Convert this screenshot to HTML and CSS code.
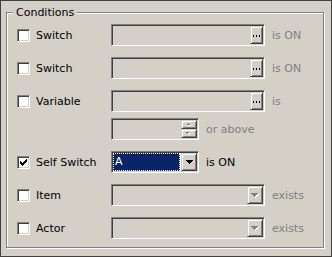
FILE: index.html
```html
<!DOCTYPE html>
<html>
<head>
    <meta http-equiv="Content-Type" content="text/html; charset=utf-8" />
    <link rel="stylesheet" href="styles.css">
    <title>Conditions</title>
</head>
<body>
<div class="window">
    <div class="group">
        <span class="legend">Conditions</span>

        <div class="row">
            <span class="check"></span>
            <span class="label">Switch</span>
            <div class="field">
                <span class="btn"><svg width="7" height="2" viewBox="0 0 7 2"><path d="M0 0h1v2h-1zM3 0h1v2h-1zM6 0h1v2h-1z" fill="#000"/></svg></span>
            </div>
            <span class="after off">is ON</span>
        </div>

        <div class="row">
            <span class="check"></span>
            <span class="label">Switch</span>
            <div class="field">
                <span class="btn"><svg width="7" height="2" viewBox="0 0 7 2"><path d="M0 0h1v2h-1zM3 0h1v2h-1zM6 0h1v2h-1z" fill="#000"/></svg></span>
            </div>
            <span class="after off">is ON</span>
        </div>

        <div class="row tight">
            <span class="check"></span>
            <span class="label">Variable</span>
            <div class="field">
                <span class="btn"><svg width="7" height="2" viewBox="0 0 7 2"><path d="M0 0h1v2h-1zM3 0h1v2h-1zM6 0h1v2h-1z" fill="#000"/></svg></span>
            </div>
            <span class="after off">is</span>
        </div>

        <div class="row">
            <span class="spacer"></span>
            <div class="field short">
                <span class="spin">
                    <span class="btn half"><svg width="6" height="4" viewBox="0 0 6 4"><path d="M3 1h1v1h1v1h-3v-1h1z" fill="#fff"/><path d="M2 0h1v1h1v1h-3v-1h1z" fill="#808080"/></svg></span>
                    <span class="btn half"><svg width="6" height="4" viewBox="0 0 6 4"><path d="M1 1h3v1h-1v1h-1v-1h-1z" fill="#fff"/><path d="M0 0h3v1h-1v1h-1v-1h-1z" fill="#808080"/></svg></span>
                </span>
            </div>
            <span class="after off">or above</span>
        </div>

        <div class="row">
            <span class="check"><svg width="7" height="7" viewBox="0 0 7 7"><path d="M6 0h1v1h-1zM5 1h2v1h-2zM0 2h1v1h-1zM4 2h3v1h-3zM0 3h2v1h-2zM3 3h3v1h-3zM0 4h5v1h-5zM1 5h3v1h-3zM2 6h1v1h-1z" fill="#000"/></svg></span>
            <span class="label">Self Switch</span>
            <div class="field short combo on">
                <span class="sel">A</span>
                <span class="btn drop"><svg width="7" height="4" viewBox="0 0 7 4"><path d="M0 0h7v1h-1v1h-1v1h-1v1h-1v-1h-1v-1h-1v-1h-1z" fill="#000"/></svg></span>
            </div>
            <span class="after">is ON</span>
        </div>

        <div class="row">
            <span class="check"></span>
            <span class="label">Item</span>
            <div class="field">
                <span class="btn drop"><svg width="8" height="5" viewBox="0 0 8 5"><path d="M1 1h7v1h-1v1h-1v1h-1v1h-1v-1h-1v-1h-1v-1h-1z" fill="#fff"/><path d="M0 0h7v1h-1v1h-1v1h-1v1h-1v-1h-1v-1h-1v-1h-1z" fill="#808080"/></svg></span>
            </div>
            <span class="after off">exists</span>
        </div>

        <div class="row">
            <span class="check"></span>
            <span class="label">Actor</span>
            <div class="field">
                <span class="btn drop"><svg width="8" height="5" viewBox="0 0 8 5"><path d="M1 1h7v1h-1v1h-1v1h-1v1h-1v-1h-1v-1h-1v-1h-1z" fill="#fff"/><path d="M0 0h7v1h-1v1h-1v1h-1v1h-1v-1h-1v-1h-1v-1h-1z" fill="#808080"/></svg></span>
            </div>
            <span class="after off">exists</span>
        </div>
    </div>
</div>
</body>
</html>
```

FILE: styles.css
```css
* {
    box-sizing: border-box;
}
body {
    margin: 0;
    background: #d4d0c8;
    font-family: "DejaVu Sans", sans-serif;
    font-size: 11px;
    color: #000;
}
.window {
    width: 332px;
    height: 257px;
    background: #d4d0c8;
    border: 1px solid #404040;
    padding: 11px 0 0 5px;
}
.group {
    position: relative;
    width: 318px;
    height: 236px;
    border: 1px solid #808080;
    box-shadow: inset 1px 1px 0 #fff, 1px 1px 0 #fff;
    padding: 11px 0 0 10px;
}
.legend {
    position: absolute;
    top: -7px;
    left: 6px;
    padding: 0 3px;
    line-height: 13px;
    background: #d4d0c8;
}
.row {
    display: flex;
    align-items: center;
    height: 22px;
    margin-bottom: 11px;
}
.row.tight {
    margin-bottom: 6px;
}
.check {
    flex: none;
    width: 13px;
    height: 13px;
    padding: 2px;
    background: #fff;
    border: 1px solid;
    border-color: #808080 #fff #fff #808080;
    box-shadow: inset 1px 1px 0 #404040, inset -1px -1px 0 #d4d0c8;
    display: flex;
}
.check svg {
    display: block;
}
.label {
    width: 75px;
    margin-left: 6px;
    white-space: nowrap;
}
.spacer {
    width: 94px;
}
.field {
    flex: none;
    display: flex;
    justify-content: flex-end;
    width: 154px;
    height: 22px;
    padding: 1px;
    background: #d4d0c8;
    border: 1px solid;
    border-color: #808080 #fff #fff #808080;
    box-shadow: inset 1px 1px 0 #404040, inset -1px -1px 0 #d4d0c8;
}
.field.short {
    width: 88px;
}
.combo.on {
    background: #fff;
}
.sel {
    flex: 1;
    margin-right: 1px;
    padding-left: 1px;
    background: #0a246a;
    color: #fff;
    border: 1px dotted #fff8c0;
    line-height: 16px;
}
.btn {
    flex: none;
    display: flex;
    align-items: center;
    justify-content: center;
    width: 13px;
    height: 100%;
    padding-top: 2px;
    background: #d4d0c8;
    border: 1px solid;
    border-color: #d4d0c8 #404040 #404040 #d4d0c8;
    box-shadow: inset 1px 1px 0 #fff, inset -1px -1px 0 #808080;
}
.btn.drop {
    width: 16px;
    padding-top: 0;
}
.spin {
    display: flex;
    flex-direction: column;
    width: 16px;
}
.btn.half {
    width: 16px;
    height: 9px;
    padding-top: 0;
}
.after {
    margin-left: 7px;
    white-space: nowrap;
}
.after.off {
    color: #808080;
}
```
